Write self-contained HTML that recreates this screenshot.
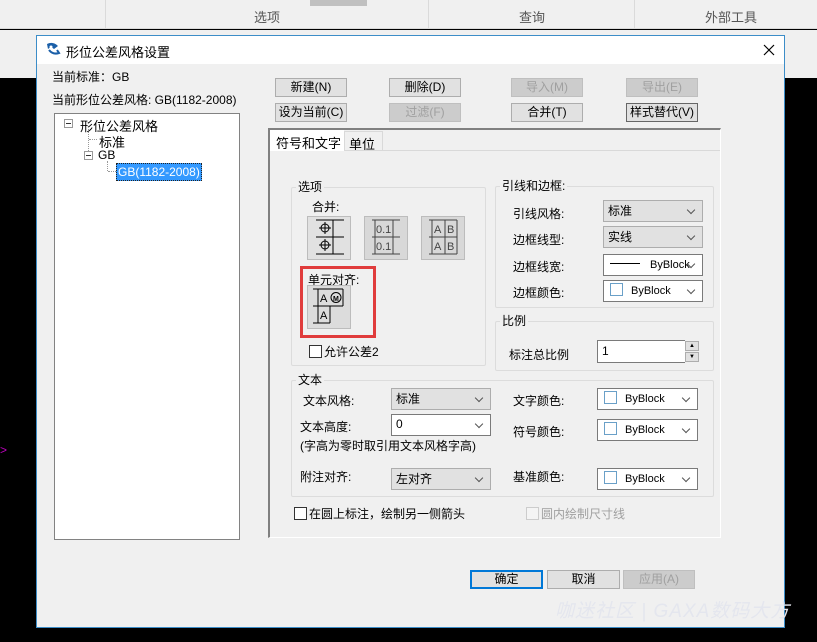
<!DOCTYPE html>
<html><head><meta charset="utf-8"><style>
*{margin:0;padding:0;box-sizing:border-box}
body{width:817px;height:642px;background:#000;position:relative;overflow:hidden;font-family:"Liberation Sans","Noto Sans CJK SC",sans-serif;font-size:12px;color:#000}
.a{position:absolute;white-space:nowrap}
.btn{position:absolute;height:19px;background:#e1e1e1;border:1px solid #adadad;text-align:center;line-height:17px;font-size:12px}
.dis{color:#a0a0a0;background:#cccccc;border-color:#bfbfbf}
.grp{position:absolute;border:1px solid #dcdcdc;border-radius:2px}
.lg{position:absolute;background:#f0f0f0;padding:0 2px;top:-9px;left:4px;line-height:16px}
.cb{position:absolute;height:22px;border:1px solid #adadad;background:#e1e1e1;line-height:20px;padding-left:4px}
.cb.w{background:#fff;border-color:#7a7a7a}
.cb:after{content:"";position:absolute;right:8px;top:6px;width:5px;height:5px;border-right:1px solid #555;border-bottom:1px solid #555;transform:rotate(45deg)}
.sw{display:inline-block;width:13px;height:13px;border:1px solid #6aa0c8;vertical-align:-2px;margin:0 8px 0 6px}
.chk{display:inline-block;width:13px;height:13px;border:1px solid #333;background:#fff;vertical-align:-2px;margin-right:2px}
.ib{position:absolute;width:44px;height:44px;background:#d8d8d8;border:1px solid #bcbcbc}
.tb{position:absolute;width:9px;height:9px;border:1px solid #999;background:#fff}
.tb:after{content:"";position:absolute;left:1px;top:3px;width:5px;height:1px;background:#333}
</style></head><body>
<div class="a" style="left:0;top:0;width:817px;height:29px;background:#f0f0f0;border-bottom:1px solid #dadada"></div>
<div class="a" style="left:105px;top:0;width:1px;height:28px;background:#dadada"></div>
<div class="a" style="left:428px;top:0;width:1px;height:28px;background:#dadada"></div>
<div class="a" style="left:634px;top:0;width:1px;height:28px;background:#dadada"></div>
<div class="a" style="left:310px;top:0;width:57px;height:6px;background:#c0c0c0"></div>
<div class="a" style="left:254px;top:7px;font-size:13px;color:#555">选项</div>
<div class="a" style="left:519px;top:7px;font-size:13px;color:#555">查询</div>
<div class="a" style="left:705px;top:7px;font-size:13px;color:#555">外部工具</div>
<div class="a" style="left:0;top:30px;width:817px;height:48px;background:#f0f0f0"></div>
<div class="a" style="left:0;top:443px;color:#c000c0;font-size:12px">&gt;</div>

<div class="a" style="left:36px;top:35px;width:749px;height:593px;background:#f0f0f0;border:1px solid #3c8dc8"></div>
<div class="a" style="left:37px;top:36px;width:747px;height:28px;background:#fff"></div>
<svg class="a" style="left:45px;top:41px" width="16" height="16" viewBox="0 0 16 16"><path d="M2 3 Q8 0 13 5 L9 8 Q6 5 3 8 Z" fill="#1a5fa8"/><path d="M4 9 Q8 14 14 12 L12 9" fill="none" stroke="#1a5fa8" stroke-width="2"/><circle cx="6" cy="6" r="1.5" fill="#fff"/></svg>
<div class="a" style="left:66px;top:42px;font-size:13px">形位公差风格设置</div>
<svg class="a" style="left:763px;top:44px" width="12" height="12"><path d="M1 1L11 11M11 1L1 11" stroke="#000" stroke-width="1.2"/></svg>

<div class="a" style="left:52px;top:68px">当前标准：GB</div>
<div class="a" style="left:52px;top:91px">当前形位公差风格: GB(1182-2008)</div>
<div class="a" style="left:54px;top:113px;width:186px;height:427px;background:#fff;border:1px solid #828282"></div>
<div class="tb" style="left:64px;top:119px"></div>
<div class="a" style="left:80px;top:116px;font-size:13px">形位公差风格</div>
<div class="a" style="left:88px;top:129px;width:1px;height:22px;border-left:1px dotted #999"></div>
<div class="a" style="left:89px;top:139px;width:8px;border-top:1px dotted #999"></div>
<div class="a" style="left:99px;top:132px;font-size:13px">标准</div>
<div class="tb" style="left:84px;top:151px"></div>
<div class="a" style="left:98px;top:148px">GB</div>
<div class="a" style="left:107px;top:161px;width:1px;height:10px;border-left:1px dotted #999"></div>
<div class="a" style="left:108px;top:171px;width:8px;border-top:1px dotted #999"></div>
<div class="a" style="left:116px;top:163px;background:#3399ff;color:#fff;padding:0 1px;line-height:16px;border:1px dotted #222">GB(1182-2008)</div>

<div class="btn" style="left:275px;top:78px;width:72px">新建(N)</div>
<div class="btn" style="left:389px;top:78px;width:72px">删除(D)</div>
<div class="btn dis" style="left:511px;top:78px;width:72px">导入(M)</div>
<div class="btn dis" style="left:626px;top:78px;width:72px">导出(E)</div>
<div class="btn" style="left:275px;top:103px;width:72px">设为当前(C)</div>
<div class="btn dis" style="left:389px;top:103px;width:72px">过滤(F)</div>
<div class="btn" style="left:511px;top:103px;width:72px">合并(T)</div>
<div class="btn" style="left:626px;top:103px;width:72px;border-color:#666">样式替代(V)</div>

<div class="a" style="left:268px;top:128px;width:453px;height:410px;border:1px solid #a0a0a0;border-left:2px solid #808080;border-top:2px solid #808080;border-right-color:#fff;border-bottom-color:#fff"></div>
<div class="a" style="left:270px;top:130px;width:74px;height:21px;background:#fff"></div>
<div class="a" style="left:276px;top:133px;font-size:13px">符号和文字</div>
<div class="a" style="left:344px;top:131px;width:39px;height:20px;border:1px solid #d9d9d9;border-bottom:none"></div>
<div class="a" style="left:349px;top:134px;font-size:13px">单位</div>
<div class="a" style="left:344px;top:150px;width:376px;height:1px;background:#d9d9d9"></div>

<div class="grp" style="left:291px;top:187px;width:195px;height:179px"><div class="lg">选项</div></div>
<div class="a" style="left:312px;top:198px">合并:</div>
<div class="ib" style="left:307px;top:216px;background:#e1e1e1"></div>
<svg class="a" style="left:313px;top:219px" width="34" height="38"><g stroke="#000" fill="none"><path d="M3 1H31M3 18H31M3 35H31M20 1V35"/><circle cx="12" cy="9" r="4"/><circle cx="12" cy="26" r="4"/><path d="M6 9H18M12 3V15M6 26H18M12 20V32"/></g></svg>
<div class="ib" style="left:364px;top:216px"></div>
<svg class="a" style="left:369px;top:219px" width="34" height="38"><g stroke="#444" fill="none"><path d="M3 1H31M3 18H31M3 35H31M6 1V35M24 1V35"/></g><text x="7" y="14" font-size="11" fill="#444" font-family="Liberation Sans">0.1</text><text x="7" y="31" font-size="11" fill="#444" font-family="Liberation Sans">0.1</text></svg>
<div class="ib" style="left:421px;top:216px"></div>
<svg class="a" style="left:426px;top:219px" width="34" height="38"><g stroke="#444" fill="none"><path d="M3 1H31M3 18H31M3 35H31M6 1V35M19 1V35M31 1V35"/></g><text x="8" y="14" font-size="11" fill="#444" font-family="Liberation Sans">A</text><text x="21" y="14" font-size="11" fill="#444" font-family="Liberation Sans">B</text><text x="8" y="31" font-size="11" fill="#444" font-family="Liberation Sans">A</text><text x="21" y="31" font-size="11" fill="#444" font-family="Liberation Sans">B</text></svg>
<div class="a" style="left:300px;top:266px;width:76px;height:72px;border:3px solid #e03c3c"></div>
<div class="a" style="left:308px;top:271px">单元对齐:</div>
<div class="ib" style="left:307px;top:285px;background:#dcdcdc"></div>
<svg class="a" style="left:312px;top:288px" width="34" height="38"><g stroke="#000" fill="none"><path d="M1 1H31M1 18H31M1 35H18M6 1V35M31 1V18M18 18V35"/><circle cx="24" cy="9.5" r="5"/></g><text x="8" y="14" font-size="11" font-family="Liberation Sans">A</text><text x="21" y="13" font-size="7" font-weight="bold" font-family="Liberation Sans">M</text><text x="8" y="31" font-size="11" font-family="Liberation Sans">A</text></svg>
<div class="a" style="left:309px;top:343px;font-size:12px"><span class="chk"></span>允许公差2</div>

<div class="grp" style="left:495px;top:186px;width:219px;height:122px"><div class="lg">引线和边框:</div></div>
<div class="a" style="left:513px;top:205px">引线风格:</div>
<div class="cb" style="left:603px;top:200px;width:100px">标准</div>
<div class="a" style="left:513px;top:231px">边框线型:</div>
<div class="cb" style="left:603px;top:226px;width:100px">实线</div>
<div class="a" style="left:513px;top:258px">边框线宽:</div>
<div class="cb w" style="left:603px;top:254px;width:100px;font-size:11px;padding-left:6px"><span style="display:inline-block;width:30px;border-top:1px solid #000;vertical-align:4px;margin-right:10px"></span>ByBlock</div>
<div class="a" style="left:513px;top:284px">边框颜色:</div>
<div class="cb w" style="left:603px;top:280px;width:100px;font-size:11px;padding-left:0"><span class="sw"></span>ByBlock</div>

<div class="grp" style="left:495px;top:321px;width:219px;height:50px"><div class="lg">比例</div></div>
<div class="a" style="left:509px;top:346px">标注总比例</div>
<div class="a" style="left:597px;top:340px;width:88px;height:23px;background:#fff;border:1px solid #7a7a7a;border-right:none;padding:3px 4px">1</div>
<div class="a" style="left:685px;top:341px;width:14px;height:10px;background:#e1e1e1;border:1px solid #adadad;font-size:6px;text-align:center;line-height:8px">▲</div>
<div class="a" style="left:685px;top:352px;width:14px;height:10px;background:#e1e1e1;border:1px solid #adadad;font-size:6px;text-align:center;line-height:8px">▼</div>

<div class="grp" style="left:291px;top:380px;width:423px;height:117px"><div class="lg">文本</div></div>
<div class="a" style="left:303px;top:392px">文本风格:</div>
<div class="cb" style="left:391px;top:388px;width:100px">标准</div>
<div class="a" style="left:300px;top:418px">文本高度:</div>
<div class="cb w" style="left:391px;top:414px;width:100px;line-height:18px">0</div>
<div class="a" style="left:300px;top:437px">(字高为零时取引用文本风格字高)</div>
<div class="a" style="left:300px;top:468px">附注对齐:</div>
<div class="cb" style="left:391px;top:468px;width:100px">左对齐</div>
<div class="a" style="left:513px;top:392px">文字颜色:</div>
<div class="cb w" style="left:597px;top:388px;width:101px;font-size:11px;padding-left:0"><span class="sw"></span>ByBlock</div>
<div class="a" style="left:513px;top:423px">符号颜色:</div>
<div class="cb w" style="left:597px;top:419px;width:101px;font-size:11px;padding-left:0"><span class="sw"></span>ByBlock</div>
<div class="a" style="left:513px;top:468px">基准颜色:</div>
<div class="cb w" style="left:597px;top:468px;width:101px;font-size:11px;padding-left:0"><span class="sw"></span>ByBlock</div>

<div class="a" style="left:294px;top:505px;font-size:12px"><span class="chk"></span>在圆上标注，绘制另一侧箭头</div>
<div class="a" style="left:526px;top:505px;color:#a0a0a0"><span class="chk" style="border-color:#ccc;background:#f4f4f4"></span>圆内绘制尺寸线</div>

<div class="btn" style="left:470px;top:570px;width:73px;border:2px solid #0078d7;line-height:15px">确定</div>
<div class="btn" style="left:547px;top:570px;width:73px">取消</div>
<div class="btn dis" style="left:623px;top:570px;width:72px">应用(A)</div>
<div class="a" style="left:555px;top:596px;font-size:19px;font-style:italic;color:#e4e6ee;letter-spacing:1px">咖迷社区 | GAXA数码大方</div>
</body></html>
